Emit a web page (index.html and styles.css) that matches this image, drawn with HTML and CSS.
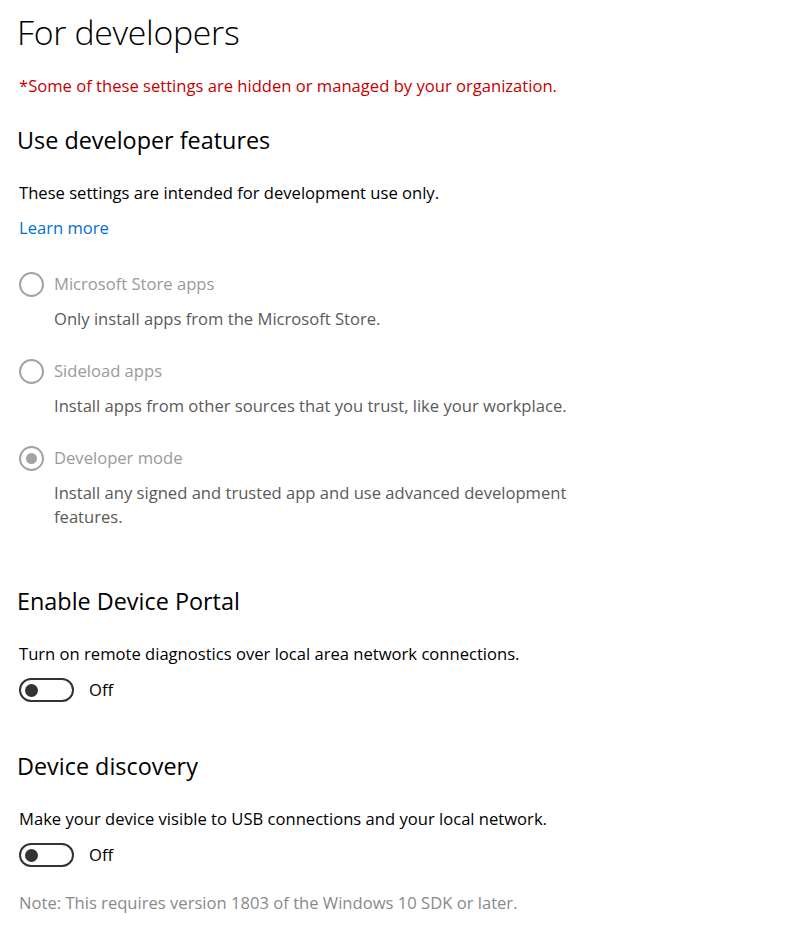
FILE: index.html
```html
<!DOCTYPE html>
<html lang="en">
<head>
<meta charset="utf-8">
<title>For developers</title>
<link rel="stylesheet" href="styles.css">
</head>
<body>
<main class="page">
  <h1 class="title">For developers</h1>
  <p class="managed">*Some of these settings are hidden or managed by your organization.</p>

  <h2 class="section-title first">Use developer features</h2>
  <p class="text intro">These settings are intended for development use only.</p>
  <a class="link" href="#">Learn more</a>

  <div class="options">
    <div class="option">
      <div class="radio-row">
        <span class="radio"></span>
        <span class="radio-label">Microsoft Store apps</span>
      </div>
      <p class="option-desc">Only install apps from the Microsoft Store.</p>
    </div>
    <div class="option">
      <div class="radio-row">
        <span class="radio"></span>
        <span class="radio-label">Sideload apps</span>
      </div>
      <p class="option-desc">Install apps from other sources that you trust, like your workplace.</p>
    </div>
    <div class="option">
      <div class="radio-row">
        <span class="radio checked"></span>
        <span class="radio-label">Developer mode</span>
      </div>
      <p class="option-desc">Install any signed and trusted app and use advanced development features.</p>
    </div>
  </div>

  <h2 class="section-title portal">Enable Device Portal</h2>
  <p class="text">Turn on remote diagnostics over local area network connections.</p>
  <div class="toggle-row">
    <span class="toggle"><span class="knob"></span></span>
    <span class="toggle-label">Off</span>
  </div>

  <h2 class="section-title discovery">Device discovery</h2>
  <p class="text">Make your device visible to USB connections and your local network.</p>
  <div class="toggle-row">
    <span class="toggle"><span class="knob"></span></span>
    <span class="toggle-label">Off</span>
  </div>
  <p class="note">Note: This requires version 1803 of the Windows 10 SDK or later.</p>
</main>
</body>
</html>
```
FILE: styles.css
```css
* { box-sizing: border-box; }

html, body {
  margin: 0;
  padding: 0;
  background: #ffffff;
}

body {
  font-family: "Open Sans", "Noto Sans", "Liberation Sans", sans-serif;
  color: #000000;
  font-size: 16.6px;
  line-height: 24px;
}

.page {
  padding: 8px 0 0 19px;
  display: flex;
  flex-direction: column;
  align-items: flex-start;
}

.title {
  margin: 0 0 0 -2px;
  font-size: 33.8px;
  line-height: 48px;
  font-weight: 300;
  letter-spacing: -0.3px;
}

.managed {
  margin: 18px 0 0 0;
  color: #c50000;
}

.section-title {
  margin: 0 0 0 -2px;
  font-size: 23.4px;
  line-height: 32px;
  font-weight: 400;
}

.section-title.first { margin-top: 26px; }
.section-title.portal { margin-top: 56px; }
.section-title.discovery { margin-top: 44px; }

.text {
  margin: 25px 0 0 0;
}

.link {
  margin-top: 11px;
  color: #0070d0;
  text-decoration: none;
}

.options {
  margin-top: 28px;
  display: flex;
  flex-direction: column;
  gap: 24px;
}

.radio-row {
  display: flex;
  align-items: center;
  height: 32px;
  gap: 10px;
}

.radio {
  width: 25px;
  height: 25px;
  border: 2.5px solid #a3a3a3;
  border-radius: 50%;
  display: flex;
  align-items: center;
  justify-content: center;
}

.radio.checked::after {
  content: "";
  width: 11px;
  height: 11px;
  border-radius: 50%;
  background: #a3a3a3;
}

.radio-label {
  color: #9a9a9a;
}

.option-desc {
  margin: 7px 0 0 35px;
  max-width: 545px;
  color: #5a5a5a;
}

.toggle-row {
  margin-top: 8px;
  display: flex;
  align-items: center;
  height: 32px;
  gap: 15px;
}

.toggle {
  width: 55px;
  height: 24px;
  border: 2.5px solid #333333;
  border-radius: 12px;
  display: flex;
  align-items: center;
  padding-left: 3.5px;
}

.knob {
  width: 13px;
  height: 13px;
  border-radius: 50%;
  background: #333333;
}

.toggle-label {
  color: #000000;
}

.note {
  margin: 20px 0 0 0;
  color: #8a8a8a;
}
```
